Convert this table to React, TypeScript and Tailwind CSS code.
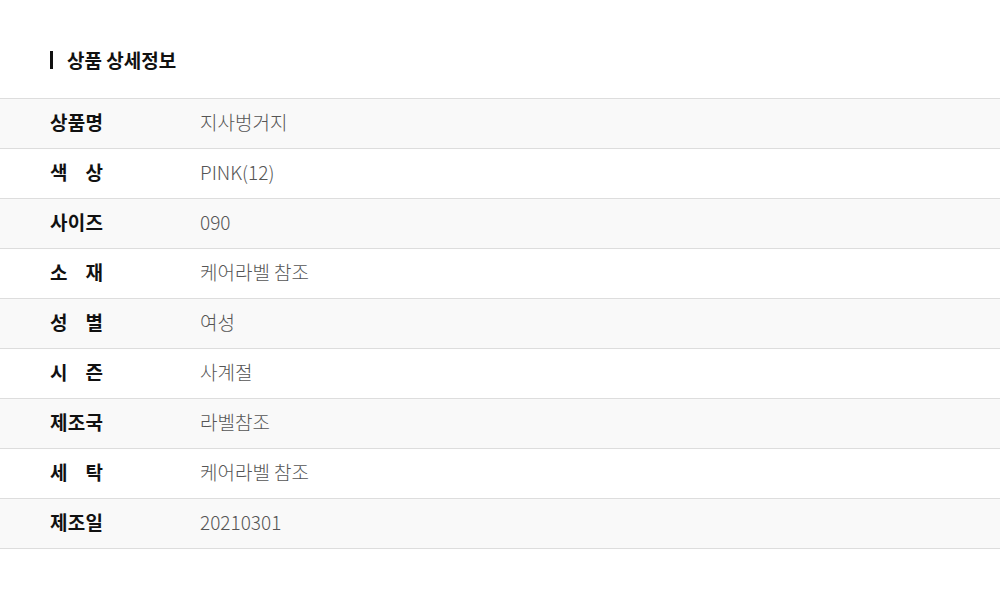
const rows: { label: string; value: string }[] = [
  { label: "상품명", value: "지사벙거지" },
  { label: "색상", value: "PINK(12)" },
  { label: "사이즈", value: "090" },
  { label: "소재", value: "케어라벨 참조" },
  { label: "성별", value: "여성" },
  { label: "시즌", value: "사계절" },
  { label: "제조국", value: "라벨참조" },
  { label: "세탁", value: "케어라벨 참조" },
  { label: "제조일", value: "20210301" },
];

export default function App() {
  return (
    <div
      className="w-[1000px] h-[598px] bg-white"
      style={{ fontFamily: "'Noto Sans CJK KR', 'Noto Sans', sans-serif" }}
    >
      {/* header */}
      <div className="flex items-center h-[98px] pl-[50px] pt-[22px]">
        <div className="w-[3px] h-[18px] bg-[#111]" />
        <h2 className="ml-[14px] text-[19px] font-bold text-[#111]">상품 상세정보</h2>
      </div>

      {/* table */}
      <div className="border-t border-[#dddddd]">
        {rows.map((r, i) => (
          <div
            key={r.label}
            className={`flex items-center h-[50px] pb-[3px] border-b border-[#dddddd] ${
              i % 2 === 0 ? "bg-[#f9f9f9]" : "bg-white"
            }`}
          >
            <div className="w-[200px] pl-[50px]">
              <div className="flex justify-between w-[53px] text-[19px] font-bold text-[#111]">
                {r.label.split("").map((c, j) => (
                  <span key={j}>{c}</span>
                ))}
              </div>
            </div>
            <div className="text-[19px] text-[#555] font-light">{r.value}</div>
          </div>
        ))}
      </div>
    </div>
  );
}
